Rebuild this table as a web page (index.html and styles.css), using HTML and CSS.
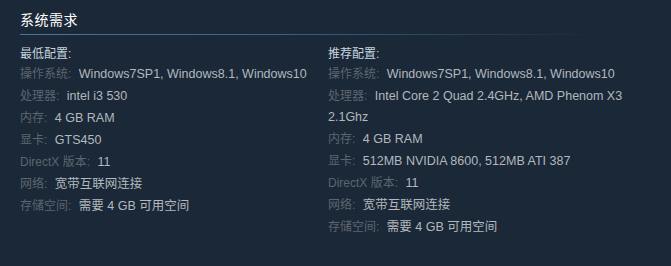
FILE: index.html
```html
<!DOCTYPE html>
<html lang="zh-CN">
<head>
<meta charset="utf-8">
<link rel="stylesheet" href="styles.css">
</head>
<body>
<div class="sysreq">
  <h2 class="title">系统需求</h2>
  <div class="cols">
    <div class="col">
      <div class="col-head">最低配置:</div>
      <ul class="list">
        <li><span class="lbl">操作系统:</span> Windows7SP1, Windows8.1, Windows10</li>
        <li><span class="lbl">处理器:</span> intel i3 530</li>
        <li><span class="lbl">内存:</span> 4 GB RAM</li>
        <li><span class="lbl">显卡:</span> GTS450</li>
        <li><span class="lbl">DirectX 版本:</span> 11</li>
        <li><span class="lbl">网络:</span> 宽带互联网连接</li>
        <li><span class="lbl">存储空间:</span> 需要 4 GB 可用空间</li>
      </ul>
    </div>
    <div class="col">
      <div class="col-head">推荐配置:</div>
      <ul class="list">
        <li><span class="lbl">操作系统:</span> Windows7SP1, Windows8.1, Windows10</li>
        <li><span class="lbl">处理器:</span> Intel Core 2 Quad 2.4GHz, AMD Phenom X3 2.1Ghz</li>
        <li><span class="lbl">内存:</span> 4 GB RAM</li>
        <li><span class="lbl">显卡:</span> 512MB NVIDIA 8600, 512MB ATI 387</li>
        <li><span class="lbl">DirectX 版本:</span> 11</li>
        <li><span class="lbl">网络:</span> 宽带互联网连接</li>
        <li><span class="lbl">存储空间:</span> 需要 4 GB 可用空间</li>
      </ul>
    </div>
  </div>
</div>
</body>
</html>
```
FILE: styles.css
```css
html, body {
  margin: 0;
  padding: 0;
  background: #1b2838;
}
body {
  font-family: "Liberation Sans", Arial, "Noto Sans CJK SC", sans-serif;
  font-size: 12.5px;
  color: #b2b8be;
}
.sysreq {
  padding: 10px 20px 0 20px;
  width: 631px;
}
.title {
  margin: 0;
  font-size: 14px;
  font-weight: normal;
  line-height: 20px;
  letter-spacing: 0.5px;
  color: #ffffff;
  background-image: linear-gradient(to right, #4079a0 0%, #376585 40%, rgba(53, 96, 127, 0) 92%);
  background-size: 100% 1px;
  background-repeat: no-repeat;
  background-position: left bottom;
  padding-bottom: 5px;
}
.cols {
  display: grid;
  grid-template-columns: 308px 308px;
  margin-top: 9px;
}
.col-head {
  font-size: 12px;
  line-height: 20px;
  color: #c6d4df;
}
.list {
  list-style: none;
  margin: 0;
  padding: 0;
}
.list li {
  line-height: 21px;
  margin-bottom: 1px;
}
.lbl {
  font-size: 12px;
  color: #5c666f;
  margin-right: 4px;
}
```
